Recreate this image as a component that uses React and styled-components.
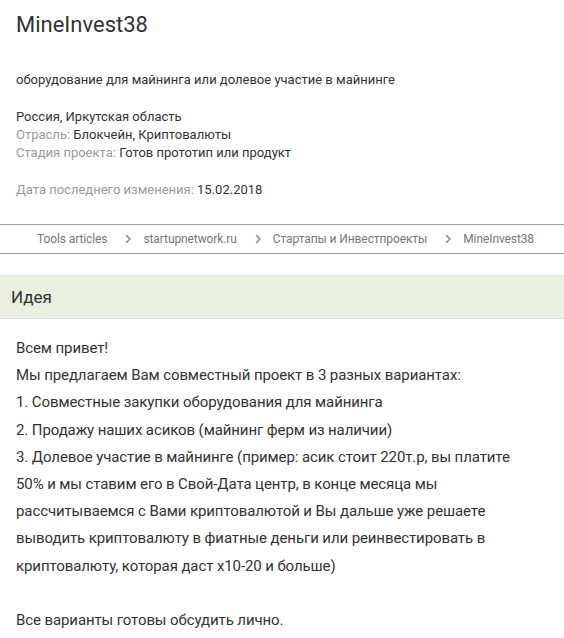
import React from 'react'
import styled, { createGlobalStyle } from 'styled-components'

const GlobalStyle = createGlobalStyle`
  body {
    margin: 0;
    background: #ffffff;
    font-family: Roboto, "Noto Sans", Arial, sans-serif;
    color: #333333;
  }
`;

const Page = styled.div`
  width: 564px;
  overflow: hidden;
`;

const Info = styled.section`
  padding: 12px 16px 0 16px;
`;

const Title = styled.h1`
  margin: 0;
  font-size: 22px;
  line-height: 26px;
  font-weight: 400;
  color: #333333;
`;

const Line = styled.div`
  font-size: 13px;
  line-height: 18px;
  color: #333333;
  margin-top: ${props => props.gap || 0}px;
`;

const Label = styled.span`
  color: #999999;
`;

const Crumbs = styled.nav`
  margin-top: 25px;
  height: 28px;
  border-top: 1px solid #a0a0a0;
  border-bottom: 1px solid #a0a0a0;
  display: flex;
  align-items: center;
  padding-left: 37px;
  font-size: 12px;
  letter-spacing: -0.1px;
  color: #777777;
`;

const Crumb = styled.a`
  color: #777777;
  text-decoration: none;
  white-space: nowrap;
`;

const Sep = styled.span`
  display: flex;
  align-items: center;
  margin: 0 12px 0 18px;
`;

const SectionHead = styled.h2`
  margin: 21px 0 0 0;
  height: 42px;
  border-top: 1px solid #dddddd;
  border-bottom: 1px solid #dddddd;
  background: #e9f0df;
  display: flex;
  align-items: center;
  padding-left: 11px;
  font-size: 17px;
  font-weight: 400;
  color: #333333;
`;

const Body = styled.div`
  padding: 16px 36px 0 16px;
  font-size: 15px;
  letter-spacing: -0.1px;
  line-height: 27.2px;
  color: #333333;
`;

const Chevron = () => (
  <svg width="6" height="10" viewBox="0 0 6 10">
    <path d="M1.2 1.2 L4.8 5 L1.2 8.8" fill="none" stroke="#999" strokeWidth="1.8" />
  </svg>
);

const crumbs = ['Tools articles', 'startupnetwork.ru', 'Стартапы и Инвестпроекты', 'MineInvest38'];

export default function App() {
  return (
    <Page>
      <GlobalStyle />
      <Info>
        <Title>MineInvest38</Title>
        <Line gap={33}>оборудование для майнинга или долевое участие в майнинге</Line>
        <Line gap={19}>Россия, Иркутская область</Line>
        <Line><Label>Отрасль:</Label> Блокчейн, Криптовалюты</Line>
        <Line><Label>Стадия проекта:</Label> Готов прототип или продукт</Line>
        <Line gap={19}><Label>Дата последнего изменения:</Label> 15.02.2018</Line>
      </Info>
      <Crumbs>
        {crumbs.map((c, i) => (
          <React.Fragment key={c}>
            {i > 0 && <Sep><Chevron /></Sep>}
            <Crumb href="#">{c}</Crumb>
          </React.Fragment>
        ))}
      </Crumbs>
      <SectionHead>Идея</SectionHead>
      <Body>
        Всем привет!<br />
        Мы предлагаем Вам совместный проект в 3 разных вариантах:<br />
        1. Совместные закупки оборудования для майнинга<br />
        2. Продажу наших асиков (майнинг ферм из наличии)<br />
        3. Долевое участие в майнинге (пример: асик стоит 220т.р, вы платите 50% и мы ставим его в Свой-Дата центр, в конце месяца мы рассчитываемся с Вами криптовалютой и Вы дальше уже решаете выводить криптовалюту в фиатные деньги или реинвестировать в криптовалюту, которая даст х10-20 и больше)<br />
        <br />
        Все варианты готовы обсудить лично.
      </Body>
    </Page>
  );
}
